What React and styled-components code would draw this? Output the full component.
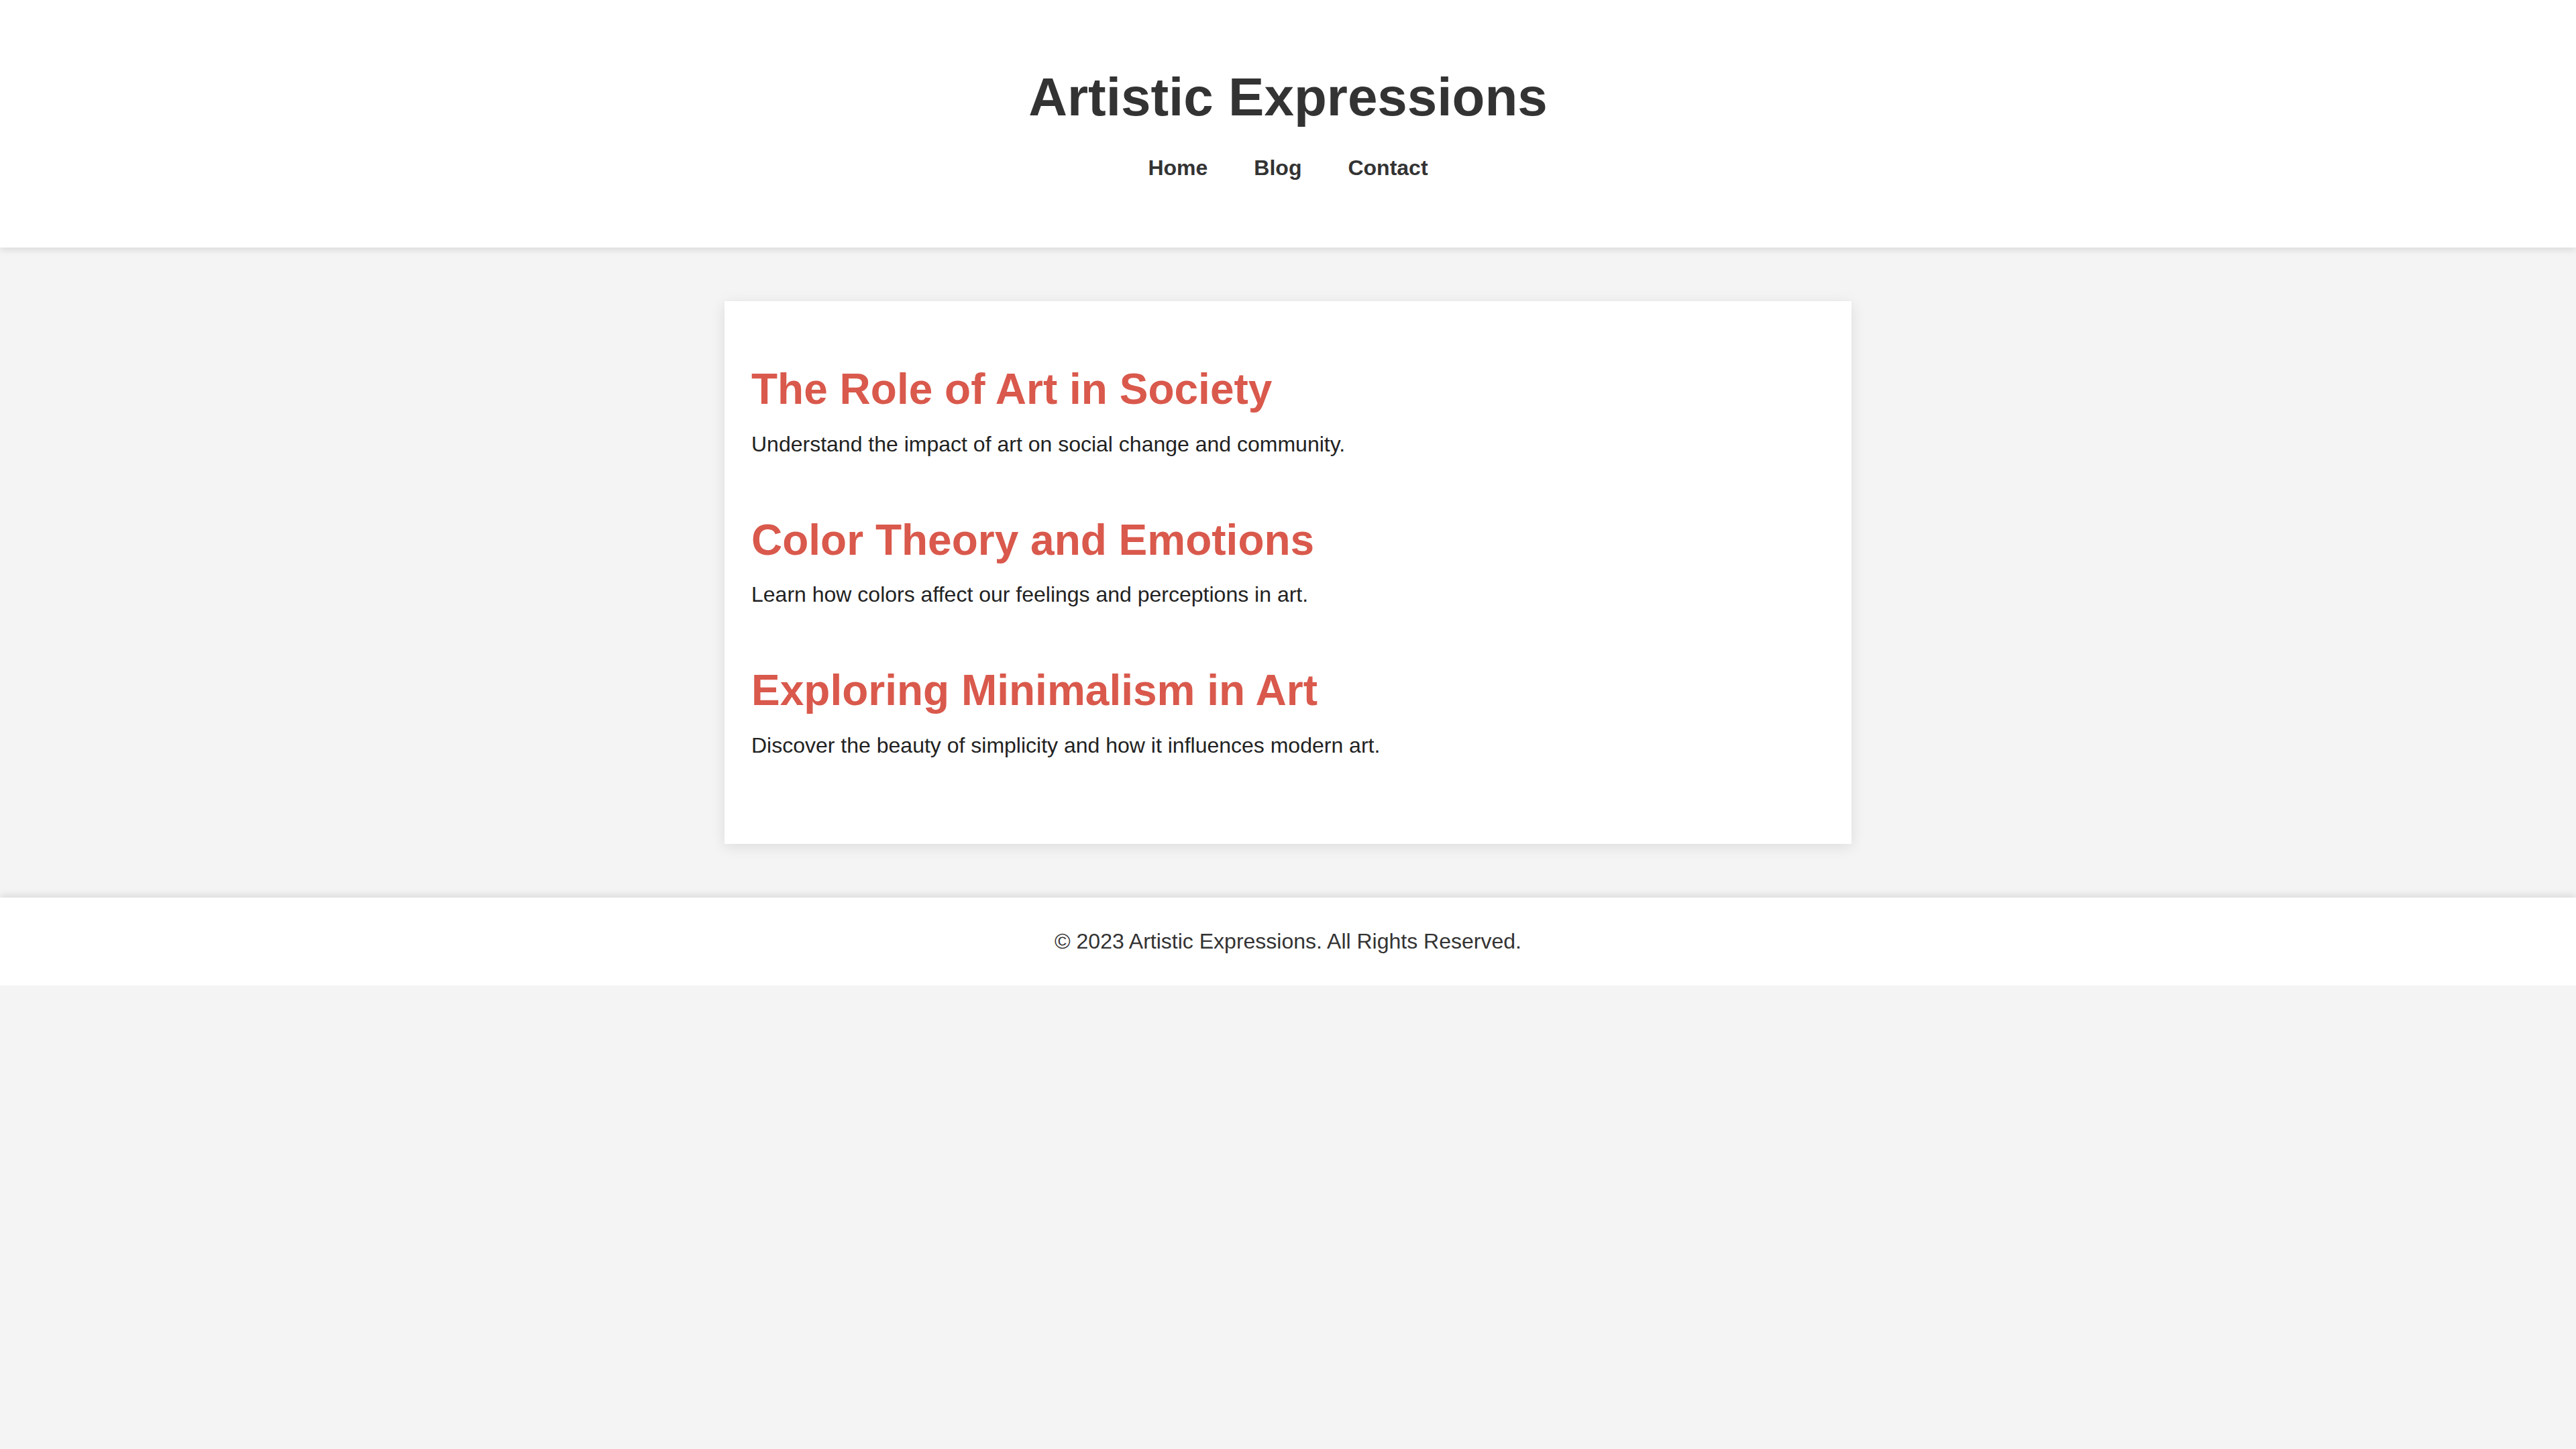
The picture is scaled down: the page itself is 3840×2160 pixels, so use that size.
import React from 'react';
import styled, { createGlobalStyle } from 'styled-components';

const GlobalStyle = createGlobalStyle`
  html, body {
    margin: 0;
    padding: 0;
    background: #f4f4f4;
    color: #333;
    font-family: "Liberation Sans", Arial, sans-serif;
    line-height: 1.6;
  }
`;

const Header = styled.header`
  background: #fff;
  padding: 81px 0 93px;
  text-align: center;
  box-shadow: 0 4px 10px rgba(0, 0, 0, 0.1);
  position: relative;
  z-index: 1;
`;

const Title = styled.h1`
  margin: 0 0 16px;
  font-size: 80px;
  font-weight: bold;
  line-height: 1.6;
  color: #333;
`;

const Nav = styled.nav`
  display: flex;
  justify-content: center;
  gap: 69px;
`;

const NavLink = styled.a`
  font-size: 32px;
  font-weight: bold;
  color: #333;
  text-decoration: none;
`;

const Main = styled.main`
  padding: 80px 0;
`;

const Card = styled.section`
  box-sizing: border-box;
  width: 1680px;
  margin: 0 auto;
  background: #fff;
  padding: 40px 40px 55px;
  box-shadow: 0 4px 20px rgba(0, 0, 0, 0.1);
`;

const Post = styled.article`
  margin: 40px 0 66px;
`;

const PostTitle = styled.h2`
  margin: 0 0 5px;
  font-size: 64px;
  font-weight: bold;
  line-height: 1.6;
  color: #d9594c;
`;

const PostText = styled.p`
  margin: 0;
  font-size: 32px;
  color: #222;
`;

const Footer = styled.footer`
  background: #fff;
  padding: 40px 0;
  text-align: center;
  font-size: 32px;
  color: #333;
  box-shadow: 0 -4px 10px rgba(0, 0, 0, 0.1);
`;

const posts = [
  {
    title: 'The Role of Art in Society',
    text: 'Understand the impact of art on social change and community.',
  },
  {
    title: 'Color Theory and Emotions',
    text: 'Learn how colors affect our feelings and perceptions in art.',
  },
  {
    title: 'Exploring Minimalism in Art',
    text: 'Discover the beauty of simplicity and how it influences modern art.',
  },
];

export default function App() {
  return (
    <>
      <GlobalStyle />
      <Header>
        <Title>Artistic Expressions</Title>
        <Nav>
          <NavLink href="#">Home</NavLink>
          <NavLink href="#">Blog</NavLink>
          <NavLink href="#">Contact</NavLink>
        </Nav>
      </Header>
      <Main>
        <Card>
          {posts.map((p) => (
            <Post key={p.title}>
              <PostTitle>{p.title}</PostTitle>
              <PostText>{p.text}</PostText>
            </Post>
          ))}
        </Card>
      </Main>
      <Footer>© 2023 Artistic Expressions. All Rights Reserved.</Footer>
    </>
  );
}
